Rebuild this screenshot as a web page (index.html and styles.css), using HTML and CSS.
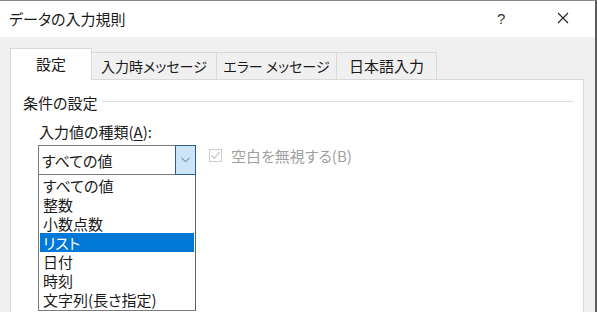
FILE: index.html
```html
<!DOCTYPE html>
<html lang="ja">
<head>
    <meta charset="UTF-8">
    <meta name="viewport" content="width=device-width, initial-scale=1.0">
    <title>データの入力規則</title>
    <link rel="stylesheet" href="styles.css">
</head>
<body>
    <div class="window">
        <div class="titlebar">
            <span class="title">データの入力規則</span>
            <span class="help">?</span>
            <span class="close">
                <svg width="12" height="12" viewBox="0 0 12 12"><path d="M1 1 L11 11 M11 1 L1 11" stroke="#222" stroke-width="1.1" fill="none"/></svg>
            </span>
        </div>
        <div class="dlgbody">
            <div class="tabs">
                <div class="tab active">設定</div>
                <div class="tab t2">入力時メッセージ</div>
                <div class="tab t3">エラー メッセージ</div>
                <div class="tab t4">日本語入力</div>
            </div>
            <div class="panel">
                <div class="group">
                    <span>条件の設定</span>
                    <span class="rule"></span>
                </div>
                <div class="label">入力値の種類(<u>A</u>):</div>
                <div class="row">
                    <div class="combo">
                        <span class="combotext">すべての値</span>
                        <span class="dropbtn">
                            <svg width="9" height="6" viewBox="0 0 9 6"><path d="M0.5 0.8 L4.5 4.8 L8.5 0.8" stroke="#5a6f85" stroke-width="1" fill="none"/></svg>
                        </span>
                    </div>
                    <label class="check">
                        <span class="box">
                            <svg width="11" height="11" viewBox="0 0 11 11"><path d="M1.5 5.5 L4.3 8.3 L9.5 2" stroke="#c4c4c4" stroke-width="1.2" fill="none"/></svg>
                        </span>
                        空白を無視する(B)
                    </label>
                </div>
                <ul class="list">
                    <li>すべての値</li>
                    <li>整数</li>
                    <li>小数点数</li>
                    <li class="sel">リスト</li>
                    <li>日付</li>
                    <li>時刻</li>
                    <li>文字列(長さ指定)</li>
                </ul>
            </div>
        </div>
    </div>
</body>
</html>
```

FILE: styles.css
```css
body{
    margin: 0;
    font-family: "Noto Sans CJK JP", "Noto Sans", sans-serif;
    font-feature-settings: "palt";
    color: #1a1a1a;
}
.window{
    width: 595px;
    height: 311px;
    border-top: 1px solid #8a8a8a;
    border-right: 2px solid #5c5c5c;
    background: #f0f0f0;
    overflow: hidden;
    display: flex;
    flex-direction: column;
}
.titlebar{
    height: 36px;
    background: #fff;
    display: flex;
    align-items: center;
    flex-shrink: 0;
}
.title{
    font-size: 15px;
    padding-left: 9px;
    flex: 1;
    margin-top: -2px;
}
.help{
    font-family: "Liberation Sans", sans-serif;
    font-size: 15px;
    color: #333;
    width: 20px;
    margin-right: 40px;
    margin-top: -2px;
}
.close{
    width: 12px;
    height: 12px;
    margin-right: 26px;
    margin-top: -3px;
    display: flex;
}
.dlgbody{
    flex: 1;
    padding: 11px 11px 0 10px;
    display: flex;
    flex-direction: column;
}
.tabs{
    display: flex;
    align-items: flex-end;
    height: 31px;
    position: relative;
    z-index: 1;
}
.tab{
    height: 27px;
    box-sizing: border-box;
    border: 1px solid #d9d9d9;
    border-bottom: none;
    border-left: none;
    background: #f0f0f0;
    font-size: 14px;
    line-height: 26px;
    text-align: center;
}
.tab.active{
    width: 82px;
    height: 32px;
    background: #fff;
    border-left: 1px solid #d9d9d9;
    font-size: 15px;
    line-height: 30px;
    margin-bottom: -1px;
}
.t2{ width: 125px; }
.t3{ width: 120px; }
.t4{ width: 100px; font-size: 15px; }
.panel{
    flex: 1;
    background: #fff;
    border: 1px solid #d9d9d9;
    border-bottom: none;
    padding: 12px 10px 0 12px;
}
.group{
    display: flex;
    align-items: center;
    height: 20px;
    font-size: 15px;
}
.rule{
    flex: 1;
    height: 1px;
    background: #dcdcdc;
    margin-left: 5px;
    margin-top: -1px;
}
.label{
    height: 20px;
    line-height: 20px;
    font-size: 15px;
    margin-top: 10px;
    padding-left: 16px;
}
.label u{
    text-underline-offset: 2px;
}
.row{
    display: flex;
    align-items: flex-start;
    margin-top: 3px;
    padding-left: 15px;
}
.combo{
    width: 158px;
    height: 30px;
    box-sizing: border-box;
    border: 1px solid #7a7a7a;
    display: flex;
    align-items: center;
}
.combotext{
    flex: 1;
    font-size: 15px;
    padding-left: 3px;
}
.dropbtn{
    width: 21px;
    height: 30px;
    box-sizing: border-box;
    margin: -1px -1px -1px 0;
    border: 1px solid #2e5e8c;
    background: #cce4f7;
    display: flex;
    align-items: center;
    justify-content: center;
}
.check{
    display: flex;
    align-items: center;
    font-size: 15px;
    color: #a0a0a0;
    margin-left: 13px;
    margin-top: 0;
    height: 20px;
}
.box{
    width: 13px;
    height: 13px;
    box-sizing: border-box;
    border: 1px solid #cccccc;
    display: flex;
    align-items: center;
    justify-content: center;
    margin-right: 9px;
}
.list{
    list-style: none;
    margin: -1px 0 0 15px;
    padding: 1px;
    width: 158px;
    box-sizing: border-box;
    border: 1px solid #7a7a7a;
    border-right-color: #646464;
}
.list li{
    height: 19px;
    line-height: 19px;
    font-size: 15px;
    padding-left: 3px;
}
.list li.sel{
    background: #0078d7;
    color: #fff;
}
```
